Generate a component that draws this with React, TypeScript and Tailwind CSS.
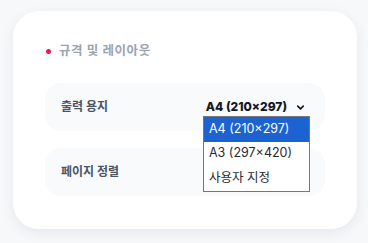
import { useState } from "react";

const options = ["A4 (210×297)", "A3 (297×420)", "사용자 지정"];

const App = () => {
  const [selected] = useState(0);

  return (
    <div
      className="w-[368px] h-[243px] bg-[#f6f8fa] pt-[11px] pl-[13px]"
      style={{ fontFamily: "Inter, 'Noto Sans CJK KR', sans-serif" }}
    >
      <div className="w-[344px] h-[218px] bg-white rounded-[26px] shadow-[0_4px_14px_rgba(15,23,42,0.07)] px-8 pt-8">
        {/* header */}
        <div className="flex items-center h-4">
          <span className="w-[5px] h-[5px] rounded-full bg-[#e11d48] ml-[1px] mr-[8px]" />
          <span className="text-[12.5px] font-bold text-[#9aa3b2] tracking-[0.6px]">
            규격 및 레이아웃
          </span>
        </div>

        <div className="mt-6 flex flex-col gap-[17px]">
          <div className="relative h-12 rounded-2xl bg-[#f8fafc] flex items-center justify-between pl-4 pr-[19px]">
            <span className="text-[12px] font-bold text-[#4b5563]">출력 용지</span>
            <div className="flex items-center gap-[8px]">
              <span className="text-[12px] font-extrabold text-[#111827]">A4 (210×297)</span>
              <svg width="11" height="11" viewBox="0 0 24 24" fill="none" stroke="#111827" strokeWidth="3.5" strokeLinecap="round" strokeLinejoin="round">
                <path d="M6 9l6 6 6-6" />
              </svg>
            </div>
            {/* open list */}
            <div className="absolute left-[158px] top-[33px] w-[107px] border border-[#767676] bg-white z-10">
              {options.map((o, i) => (
                <div
                  key={o}
                  className={
                    i === selected
                      ? "h-[24.5px] flex items-center pl-[5px] text-[12.5px] bg-[#1c62d0] text-white"
                      : "h-[24.5px] flex items-center pl-[5px] text-[12.5px] text-[#1f2937]"
                  }
                >
                  {o}
                </div>
              ))}
            </div>
          </div>

          <div className="h-12 rounded-2xl bg-[#f8fafc] flex items-center pl-4">
            <span className="text-[12px] font-bold text-[#4b5563]">페이지 정렬</span>
          </div>
        </div>
      </div>
    </div>
  );
};

export default App;
